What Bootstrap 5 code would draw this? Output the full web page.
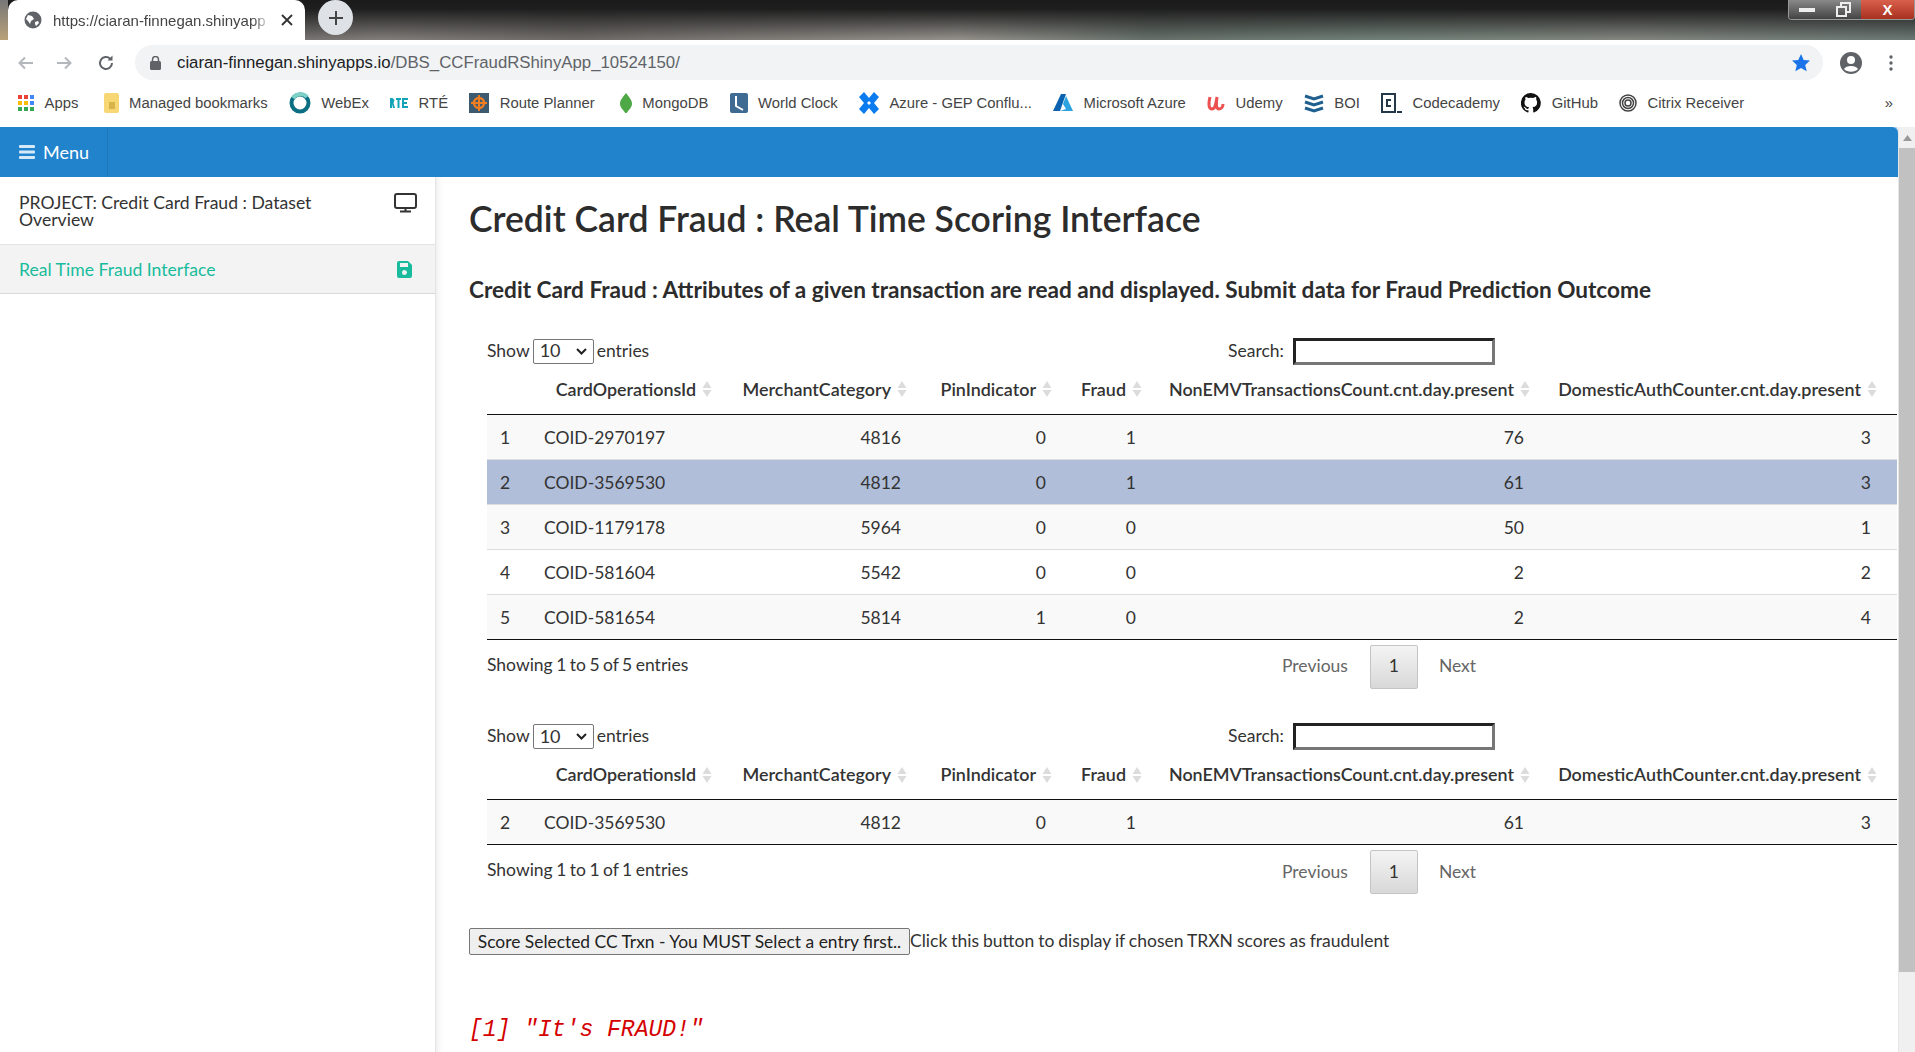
<!DOCTYPE html>
<html lang="en">
<head>
    <meta charset="UTF-8">
    <title>Credit Card Fraud</title>
    <link href="https://cdn.jsdelivr.net/npm/bootstrap@5.3.0/dist/css/bootstrap.min.css" rel="stylesheet">
    <style>
        html, body { height: 100%; overflow: hidden; }
        body { font-family: Lato, "Open Sans", sans-serif; color: #333; background: #fff; }

        /* browser chrome */
        .tab-strip { height: 40px; flex: none; background: linear-gradient(180deg, #1b1b1b 0, #1e1e1e 22%, rgba(40, 40, 40, .75) 50%, rgba(60, 60, 60, .1) 100%), linear-gradient(90deg, #555 0, #8a8682 20%, #74706c 30%, #a09c96 50%, #6c7870 60%, #788a80 72%, #8c9088 85%, #71807c 100%); }
        .tab-corner { width: 8px; background: linear-gradient(180deg, #777, #b9a27a); }
        .tab-open { width: 297px; background: #fff; border-radius: 10px 10px 0 0; padding: 0 12px 0 16px; font: 15px "Liberation Sans", sans-serif; color: #444; gap: 11px; }
        .tab-title { white-space: nowrap; -webkit-mask-image: linear-gradient(90deg, #000 94%, rgba(0, 0, 0, .25)); mask-image: linear-gradient(90deg, #000 94%, rgba(0, 0, 0, .25)); }
        .tab-new { width: 35px; height: 35px; border-radius: 50%; background: #dee1e6; margin: 0 0 4px 13px; }
        .win-btns { width: 127px; height: 20px; margin-left: auto; border: 1px solid #999; border-top: 0; border-radius: 0 0 4px 4px; overflow: hidden; }
        .win-grey { width: 36px; background: linear-gradient(180deg, #888, #444); }
        .win-close { flex: 1; background: linear-gradient(180deg, #d9604c, #a8301f); color: #fff; font: 700 15px/19px "Liberation Sans", sans-serif; text-align: center; }
        .addr-row { height: 44px; flex: none; padding: 1px 0 0 17px; gap: 20px; background: #fff; }
        .addr-reload { margin-left: 4px; }
        .addr-pill { width: 1688px; height: 35px; background: #f1f3f4; border-radius: 18px; padding: 0 12px 0 15px; font: 16.8px "Liberation Sans", sans-serif; color: #5f6368; }
        .addr-pill b { font-weight: 400; color: #202124; }
        .addr-user { margin-left: -4px; }
        .addr-dots { margin-left: 6px; }
        .book-row { height: 43px; flex: none; padding: 0 18px 5px; gap: 21.2px; font: 14.85px "Liberation Sans", sans-serif; color: #444; }
        .book-row svg { flex: none; }
        .book-item { gap: 10.5px; white-space: nowrap; }

        /* app header */
        .app-stage { min-height: 0; }
        .app-col { flex: 1; min-width: 0; }
        .app-bar { height: 50px; flex: none; background: #2283cd; color: #fff; font-size: 18px; border-top-right-radius: 6px; box-shadow: 0 -2px 0 #a9cdea; }
        .menu-tog { width: 108px; height: 100%; padding-left: 19px; gap: 8px; border-right: 1px solid #1f78bc; }

        /* sidebar */
        .side-panel { width: 436px; flex: none; border-right: 1px solid #e4e4e4; font-size: 17.6px; line-height: 17px; }
        .side-item { padding: 0 18px 0 19px; border-bottom: 1px solid #e3e3e3; }
        .side-first { height: 68px; }
        .side-pick { height: 49px; background: #f3f3f3; color: #18bc9c; border-bottom-color: #d9d9d9; }
        .save-mark { margin-right: 5px; }

        /* main */
        .main-pane { flex: 1; min-width: 0; padding: 22px 0 0 33px; box-shadow: inset 8px 0 8px -8px #e2e2e2; }
        .page-h1 { font-size: 35.5px; line-height: 40px; font-weight: 600; margin: 0; color: #2c2c2c; }
        .page-h3 { font-size: 22.6px; line-height: 26px; font-weight: 700; margin: 38px 0 29px; color: #2c2c2c; }
        .dt-wrap { margin-left: 18px; width: 1410px; font-size: 17.5px; word-spacing: -.6px; }
        .dt-top { height: 38px; }
        .dt-left { width: 741px; gap: 3px; }
        .len-pick { width: 61px; height: 25px; padding: 0 0 2px 6px; font-size: 18px; line-height: 20px; font-family: inherit; color: #333; border: 1px solid #767676; border-radius: 2px; appearance: none; background: #fff url("data:image/svg+xml,%3Csvg xmlns='http://www.w3.org/2000/svg' width='11' height='7' viewBox='0 0 11 7'%3E%3Cpath d='M1 1l4.500 4.500L10 1' fill='none' stroke='%23222' stroke-width='2'/%3E%3C/svg%3E") no-repeat right 6px center; }
        .find-box { width: 202px; height: 27px; margin-left: 9px; border: 3px solid; border-color: #222 #777 #777 #222; background: #fff; }

        .dt-grid { table-layout: fixed; width: 1410px; margin: 0; border-collapse: collapse; color: #333; }
        .dt-grid th { height: 44px; padding: 0 20px 11px 0; font-size: 17.9px; text-align: right; font-weight: 600; position: relative; white-space: nowrap; border-bottom: 1px solid #111; background: #fff; box-shadow: none; word-spacing: 0; }
        .dt-grid th:last-child { padding-right: 36px; }
        .dt-grid th svg { position: absolute; right: 4px; top: 10px; }
        .dt-grid th:last-child svg { right: 20px; }
        .dt-grid td { height: 45px; padding: 3px 10px 0 13px; text-align: right; vertical-align: middle; border-top: 1px solid #ddd; border-bottom: 0; background: #fff; box-shadow: none; color: #333; }
        .dt-grid td:nth-child(1), .dt-grid td:nth-child(2) { text-align: left; }
        .dt-grid td:last-child { padding-right: 26px; }
        .dt-grid tr:nth-child(odd) td { background: #f9f9f9; }
        .dt-grid tr.row-picked td { background: #b0bed9; }
        .dt-grid tbody tr:first-child td { border-top: 0; }
        .dt-grid tbody { border-bottom: 1px solid #111; }
        .w-a { width: 44px; } .w-b { width: 185px; } .w-c { width: 195px; } .w-d { width: 145px; }
        .w-e { width: 90px; } .w-f { width: 388px; } .w-g { width: 363px; }

        .dt-foot { height: 44px; margin-top: 5px; }
        .dt-info { width: 795px; margin-top: -3px; word-spacing: -1px; }
        .pg-link { color: #666; }
        .pg-one { width: 48px; height: 44px; margin: 0 21px 0 22px; border: 1px solid #c4c4c4; border-radius: 2px; background: linear-gradient(180deg, #f4f4f4, #d8d8d8); color: #333; }
        .dt-gap { margin-top: 29px; }

        .score-row { margin-top: 34px; font-size: 17.5px; word-spacing: -.5px; }
        .score-btn { height: 27px; width: 441px; padding: 0; font-size: 17.4px; line-height: 1; font-family: inherit; color: #222; background: #efefef; border: 1px solid #767676; border-radius: 2px; white-space: nowrap; }
        .fraud-out { margin: 60px 0 0; font: italic 23px/30px "Liberation Mono", monospace; color: #d40000; }

        .scroll-rail { width: 17px; flex: none; background: #f0f0f0; border-left: 1px solid #e6e6e6; }
        .scroll-up { height: 21px; }
        .scroll-thumb { height: 824px; background: #c1c1c1; }
    </style>
</head>

<body class="d-flex flex-column">

<div class="tab-strip d-flex">
    <div class="tab-corner"></div>
    <div class="tab-open d-flex align-items-center">
        <svg class="flex-shrink-0" width="18" height="18" viewBox="0 0 18 18"><circle cx="9" cy="9" r="8.500" fill="#5f6368"/><path d="M4 4l4 1 2 3-3 2-1 3-2-3-2-2zM11 11l3-1 1 2-3 3-1-2z" fill="#fff"/></svg>
        <div class="tab-title">https://ciaran-finnegan.shinyapp</div>
        <svg class="ms-auto flex-shrink-0" width="12" height="12" viewBox="0 0 12 12"><path d="M1 1l10 10M11 1L1 11" stroke="#333" stroke-width="1.800"/></svg>
    </div>
    <div class="tab-new d-flex align-items-center justify-content-center">
        <svg width="16" height="16" viewBox="0 0 16 16"><path d="M8 1v14M1 8h14" stroke="#444" stroke-width="2"/></svg>
    </div>
    <div class="win-btns d-flex">
        <div class="win-grey d-flex align-items-center justify-content-center"><svg width="16" height="4"><rect width="16" height="4" fill="#eee"/></svg></div>
        <div class="win-grey d-flex align-items-center justify-content-center"><svg width="16" height="15" viewBox="0 0 16 15" fill="none" stroke="#eee" stroke-width="2"><rect x="2" y="5" width="9" height="9"/><path d="M6 4V1h9v9h-3"/></svg></div>
        <div class="win-close">X</div>
    </div>
</div>

<div class="addr-row d-flex align-items-center">
    <svg width="18" height="18" viewBox="0 0 18 18" fill="none" stroke="#b4b7bb" stroke-width="2"><path d="M16 9H3M8 3.500L2.500 9 8 14.500"/></svg>
    <svg width="18" height="18" viewBox="0 0 18 18" fill="none" stroke="#b4b7bb" stroke-width="2"><path d="M2 9h13M10 3.500L15.500 9 10 14.500"/></svg>
    <svg class="addr-reload" width="18" height="18" viewBox="0 0 18 18" fill="none" stroke="#5f6368" stroke-width="2"><path d="M15 9a6 6 0 1 1-1.800-4.300"/><path d="M15.500 1.500v5h-5" fill="#5f6368" stroke="none"/></svg>
    <div class="addr-pill d-flex align-items-center">
        <svg class="me-3" width="11" height="14" viewBox="0 0 11 14"><rect y="5" width="11" height="9" rx="1.500" fill="#5f6368"/><path d="M2.500 6V3.500a3 3 0 0 1 6 0V6" fill="none" stroke="#5f6368" stroke-width="1.500"/></svg>
        <span><b>ciaran-finnegan.shinyapps.io</b>/DBS_CCFraudRShinyApp_10524150/</span>
        <svg class="ms-auto" width="20" height="20" viewBox="0 0 20 20"><path d="M10 1l2.700 6 6.300.6-4.800 4.300 1.500 6.400L10 15l-5.700 3.300 1.500-6.400L1 7.600 7.300 7z" fill="#1a73e8"/></svg>
    </div>
    <svg class="addr-user" width="24" height="24" viewBox="0 0 24 24"><circle cx="12" cy="12" r="11" fill="#5f6368"/><circle cx="12" cy="9" r="4" fill="#fff"/><path d="M5 18c2-4 12-4 14 0-3 3.500-11 3.500-14 0z" fill="#fff"/></svg>
    <svg class="addr-dots" width="4" height="16" viewBox="0 0 4 16" fill="#5f6368"><circle cx="2" cy="2" r="1.700"/><circle cx="2" cy="8" r="1.700"/><circle cx="2" cy="14" r="1.700"/></svg>
</div>

<div class="book-row d-flex align-items-center">
    <div class="book-item d-flex align-items-center">
        <svg width="16" height="16" viewBox="0 0 16 16"><path fill="#ea4335" d="M0 0h4v4H0zM6 0h4v4H6z"/><path fill="#4285f4" d="M12 0h4v4h-4zM12 6h4v4h-4z"/><path fill="#fbbc05" d="M0 6h4v4H0zM6 6h4v4H6z"/><path fill="#34a853" d="M0 12h4v4H0zM6 12h4v4H6zM12 12h4v4h-4z"/></svg>Apps</div>
    <div class="book-item d-flex align-items-center ms-1">
        <svg width="15" height="20" viewBox="0 0 15 20"><rect width="15" height="20" rx="2" fill="#f7d774"/><rect x="5" y="9" width="6" height="7" fill="#d8b34a"/></svg>Managed bookmarks</div>
    <div class="book-item d-flex align-items-center">
        <svg width="22" height="22" viewBox="0 0 22 22" fill="none"><circle cx="11" cy="11" r="8.500" stroke="#0b6f84" stroke-width="4"/><path d="M4 6a9 9 0 0 1 14-1" stroke="#7fd1c7" stroke-width="4"/></svg>WebEx</div>
    <div class="book-item d-flex align-items-center">
        <svg width="18" height="12" viewBox="0 0 18 12"><path fill="#14a3b8" d="M0 1h2.500l2 2-1 3 1.500 5H3L2 7v4H0zM6 1h5v2H9.500v8h-2V3H6zM12 1h6v2h-4v2h3v2h-3v2h4v2h-6z"/></svg>RTÉ</div>
    <div class="book-item d-flex align-items-center">
        <svg width="20" height="20" viewBox="0 0 20 20"><rect width="20" height="20" fill="#3c5a70"/><circle cx="10" cy="10" r="5" fill="none" stroke="#ef7d22" stroke-width="2.500"/><path d="M10 2v16M2 10h16" stroke="#ef7d22" stroke-width="2"/></svg>Route Planner</div>
    <div class="book-item d-flex align-items-center ms-1">
        <svg width="12" height="20" viewBox="0 0 12 20"><path d="M6 0c3 4 6 7 6 10.500 0 4-3 6-5.300 9.500h-1.400C3 16.500 0 14.500 0 10.500 0 7 3 4 6 0z" fill="#4fa846"/></svg>MongoDB</div>
    <div class="book-item d-flex align-items-center">
        <svg width="18" height="20" viewBox="0 0 18 20"><rect width="18" height="20" rx="2" fill="#3f6a92"/><path d="M6 3v10l7 4" fill="none" stroke="#fff" stroke-width="2"/></svg>World Clock</div>
    <div class="book-item d-flex align-items-center">
        <svg width="20" height="22" viewBox="0 0 20 22"><path fill="#0a7cf0" d="M0 5l5-5 5 6 5-6 5 5-5 6 5 6-5 5-5-6-5 6-5-5 5-6z"/><path fill="#fff" d="M10 9l2 2-2 2-2-2z"/></svg>Azure - GEP Conflu...</div>
    <div class="book-item d-flex align-items-center">
        <svg width="20" height="18" viewBox="0 0 20 18"><path fill="#0a62b0" d="M8 0h5L7 17H0z"/><path fill="#2da4e0" d="M13 2l7 15H7l6-2-3-5z"/></svg>Microsoft Azure</div>
    <div class="book-item d-flex align-items-center">
        <svg width="18" height="18" viewBox="0 0 18 18" fill="none" stroke="#ec5252" stroke-width="3"><path d="M3 3c-2 8-1 12 2 12 4 0 4-8 5-12-1 7-1 12 2 12 3 0 4-3 4-5"/></svg>Udemy</div>
    <div class="book-item d-flex align-items-center">
        <svg width="20" height="20" viewBox="0 0 20 20" fill="none" stroke="#1f5f8f" stroke-width="3"><path d="M1 3l9 3 9-3M1 9l9 3 9-3M1 15l9 3 9-3"/></svg>BOI</div>
    <div class="book-item d-flex align-items-center">
        <svg width="21" height="20" viewBox="0 0 21 20" fill="none" stroke="#24384a" stroke-width="2"><rect x="1" y="1" width="13" height="18"/><path d="M10 7H6v6h4M16 19h5"/></svg>Codecademy</div>
    <div class="book-item d-flex align-items-center">
        <svg width="20" height="20" viewBox="0 0 20 20"><path fill="#111" d="M10 0a10 10 0 0 0-3.200 19.500c.5.100.7-.2.700-.5v-1.800c-2.800.6-3.400-1.300-3.400-1.300-.5-1.200-1.100-1.500-1.100-1.500-.9-.6.100-.6.100-.6 1 .1 1.500 1 1.500 1 .9 1.500 2.300 1.100 2.900.8.100-.6.300-1.100.6-1.300-2.200-.3-4.600-1.100-4.600-5 0-1.100.4-2 1-2.700-.1-.3-.4-1.300.1-2.600 0 0 .8-.3 2.700 1a9.400 9.400 0 0 1 5 0c1.900-1.300 2.700-1 2.700-1 .5 1.300.2 2.300.1 2.600.6.700 1 1.600 1 2.700 0 3.900-2.300 4.700-4.600 5 .4.300.7.900.7 1.900V19c0 .3.200.6.700.5A10 10 0 0 0 10 0z"/></svg>GitHub</div>
    <div class="book-item d-flex align-items-center">
        <svg width="18" height="18" viewBox="0 0 18 18" fill="none" stroke="#444"><circle cx="9" cy="9" r="8" stroke-width="1.500"/><circle cx="9" cy="9" r="5.500" stroke-width="1.500"/><circle cx="9" cy="9" r="3" stroke-width="1.500"/></svg>Citrix Receiver</div>
    <div class="ms-auto pe-1">»</div>
</div>

<div class="app-stage d-flex flex-grow-1 overflow-hidden">
    <div class="app-col d-flex flex-column">
        <div class="app-bar d-flex align-items-center">
            <div class="menu-tog d-flex align-items-center">
                <svg width="16" height="14" viewBox="0 0 16 14" fill="#d6e9f8"><rect width="16" height="3" rx="1"/><rect y="5.500" width="16" height="3" rx="1"/><rect y="11" width="16" height="3" rx="1"/></svg>
                <span>Menu</span>
            </div>
        </div>

        <div class="d-flex flex-grow-1 overflow-hidden">
            <div class="side-panel">
                <div class="side-item side-first d-flex align-items-center justify-content-between">
                    <div class="me-5">PROJECT: Credit Card Fraud : Dataset Overview</div>
                    <svg class="flex-shrink-0 mb-3" width="23" height="20" viewBox="0 0 23 20" fill="none" stroke="#333"><rect x="1" y="1" width="21" height="14" rx="2" stroke-width="2"/><path d="M11.500 15v3M6 18.500h11" stroke-width="2"/></svg>
                </div>
                <div class="side-item side-pick d-flex align-items-center justify-content-between">
                    <div>Real Time Fraud Interface</div>
                    <svg class="save-mark" width="15" height="17" viewBox="0 0 15 17"><path fill="#18bc9c" d="M2 0h9l4 4v11a2 2 0 0 1-2 2H2a2 2 0 0 1-2-2V2a2 2 0 0 1 2-2zm1 2v4h8V2zm4.500 7a2.500 2.500 0 1 0 0 5 2.500 2.500 0 0 0 0-5z"/></svg>
                </div>
            </div>

            <div class="main-pane">
                <h1 class="page-h1">Credit Card Fraud : Real Time Scoring Interface</h1>
                <h3 class="page-h3">Credit Card Fraud : Attributes of a given transaction are read and displayed. Submit data for Fraud Prediction Outcome</h3>

                <div class="dt-wrap">
                    <div class="dt-top d-flex align-items-center">
                        <div class="dt-left d-flex align-items-center">Show <select class="len-pick"><option>10</option></select> entries</div>
                        <div class="d-flex align-items-center">Search:<div class="find-box"></div></div>
                    </div>
                    <table class="table dt-grid">
                        <colgroup><col class="w-a"><col class="w-b"><col class="w-c"><col class="w-d"><col class="w-e"><col class="w-f"><col class="w-g"></colgroup>
                        <thead>
                        <tr>
                            <th></th>
                            <th>CardOperationsId<svg width="10" height="18" viewBox="0 0 10 18" fill="#dcdcdc"><path d="M5 1l4.500 7H.5zM5 17L.5 10h9z"/></svg></th>
                            <th>MerchantCategory<svg width="10" height="18" viewBox="0 0 10 18" fill="#dcdcdc"><path d="M5 1l4.500 7H.5zM5 17L.5 10h9z"/></svg></th>
                            <th>PinIndicator<svg width="10" height="18" viewBox="0 0 10 18" fill="#dcdcdc"><path d="M5 1l4.500 7H.5zM5 17L.5 10h9z"/></svg></th>
                            <th>Fraud<svg width="10" height="18" viewBox="0 0 10 18" fill="#dcdcdc"><path d="M5 1l4.500 7H.5zM5 17L.5 10h9z"/></svg></th>
                            <th>NonEMVTransactionsCount.cnt.day.present<svg width="10" height="18" viewBox="0 0 10 18" fill="#dcdcdc"><path d="M5 1l4.500 7H.5zM5 17L.5 10h9z"/></svg></th>
                            <th>DomesticAuthCounter.cnt.day.present<svg width="10" height="18" viewBox="0 0 10 18" fill="#dcdcdc"><path d="M5 1l4.500 7H.5zM5 17L.5 10h9z"/></svg></th>
                        </tr>
                        </thead>
                        <tbody>
                        <tr><td>1</td><td>COID-2970197</td><td>4816</td><td>0</td><td>1</td><td>76</td><td>3</td></tr>
                        <tr class="row-picked"><td>2</td><td>COID-3569530</td><td>4812</td><td>0</td><td>1</td><td>61</td><td>3</td></tr>
                        <tr><td>3</td><td>COID-1179178</td><td>5964</td><td>0</td><td>0</td><td>50</td><td>1</td></tr>
                        <tr><td>4</td><td>COID-581604</td><td>5542</td><td>0</td><td>0</td><td>2</td><td>2</td></tr>
                        <tr><td>5</td><td>COID-581654</td><td>5814</td><td>1</td><td>0</td><td>2</td><td>4</td></tr>
                        </tbody>
                    </table>
                    <div class="dt-foot d-flex align-items-center">
                        <div class="dt-info">Showing 1 to 5 of 5 entries</div>
                        <span class="pg-link">Previous</span>
                        <div class="pg-one d-flex align-items-center justify-content-center">1</div>
                        <span class="pg-link">Next</span>
                    </div>
                </div>

                <div class="dt-wrap dt-gap">
                    <div class="dt-top d-flex align-items-center">
                        <div class="dt-left d-flex align-items-center">Show <select class="len-pick"><option>10</option></select> entries</div>
                        <div class="d-flex align-items-center">Search:<div class="find-box"></div></div>
                    </div>
                    <table class="table dt-grid">
                        <colgroup><col class="w-a"><col class="w-b"><col class="w-c"><col class="w-d"><col class="w-e"><col class="w-f"><col class="w-g"></colgroup>
                        <thead>
                        <tr>
                            <th></th>
                            <th>CardOperationsId<svg width="10" height="18" viewBox="0 0 10 18" fill="#dcdcdc"><path d="M5 1l4.500 7H.5zM5 17L.5 10h9z"/></svg></th>
                            <th>MerchantCategory<svg width="10" height="18" viewBox="0 0 10 18" fill="#dcdcdc"><path d="M5 1l4.500 7H.5zM5 17L.5 10h9z"/></svg></th>
                            <th>PinIndicator<svg width="10" height="18" viewBox="0 0 10 18" fill="#dcdcdc"><path d="M5 1l4.500 7H.5zM5 17L.5 10h9z"/></svg></th>
                            <th>Fraud<svg width="10" height="18" viewBox="0 0 10 18" fill="#dcdcdc"><path d="M5 1l4.500 7H.5zM5 17L.5 10h9z"/></svg></th>
                            <th>NonEMVTransactionsCount.cnt.day.present<svg width="10" height="18" viewBox="0 0 10 18" fill="#dcdcdc"><path d="M5 1l4.500 7H.5zM5 17L.5 10h9z"/></svg></th>
                            <th>DomesticAuthCounter.cnt.day.present<svg width="10" height="18" viewBox="0 0 10 18" fill="#dcdcdc"><path d="M5 1l4.500 7H.5zM5 17L.5 10h9z"/></svg></th>
                        </tr>
                        </thead>
                        <tbody>
                        <tr><td>2</td><td>COID-3569530</td><td>4812</td><td>0</td><td>1</td><td>61</td><td>3</td></tr>
                        </tbody>
                    </table>
                    <div class="dt-foot d-flex align-items-center">
                        <div class="dt-info">Showing 1 to 1 of 1 entries</div>
                        <span class="pg-link">Previous</span>
                        <div class="pg-one d-flex align-items-center justify-content-center">1</div>
                        <span class="pg-link">Next</span>
                    </div>
                </div>

                <div class="score-row d-flex align-items-center">
                    <button type="button" class="score-btn">Score Selected CC Trxn - You MUST Select a entry first..</button>
                    <span>Click this button to display if chosen TRXN scores as fraudulent</span>
                </div>
                <pre class="fraud-out">[1] "It's FRAUD!"</pre>
            </div>
        </div>
    </div>

    <div class="scroll-rail">
        <div class="scroll-up d-flex align-items-center justify-content-center">
            <svg width="9" height="6" viewBox="0 0 9 6"><path d="M4.500 0L9 6H0z" fill="#999"/></svg>
        </div>
        <div class="scroll-thumb"></div>
    </div>
</div>

</body>
</html>
